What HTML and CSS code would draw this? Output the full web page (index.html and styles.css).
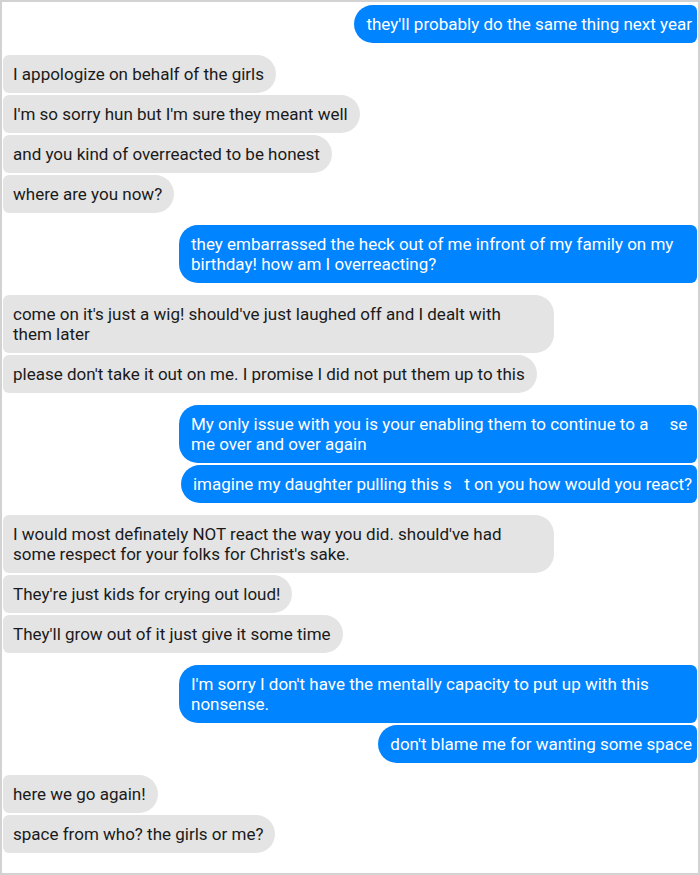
FILE: index.html
```html
<!DOCTYPE html>
<html lang="en">
<head>
<meta charset="utf-8">
<title>Chat</title>
<link rel="stylesheet" href="styles.css">
</head>
<body>
<div class="frame">
  <div class="thread">
    <div class="group">
      <div class="msg out">they'll probably do the same thing next year</div>
    </div>
    <div class="group">
      <div class="msg in">I appologize on behalf of the girls</div>
      <div class="msg in">I'm so sorry hun but I'm sure they meant well</div>
      <div class="msg in">and you kind of overreacted to be honest</div>
      <div class="msg in">where are you now?</div>
    </div>
    <div class="group">
      <div class="msg out">they embarrassed the heck out of me infront of my family on my birthday! how am I overreacting?</div>
    </div>
    <div class="group">
      <div class="msg in">come on it's just a wig! should've just laughed off and I dealt with them later</div>
      <div class="msg in">please don't take it out on me. I promise I did not put them up to this</div>
    </div>
    <div class="group">
      <div class="msg out">My only issue with you is your enabling them to continue to a&nbsp;&nbsp;&nbsp;&nbsp;&nbsp;se me over and over again</div>
      <div class="msg out">imagine my daughter pulling this s&nbsp;&nbsp;&nbsp;t on you how would you react?</div>
    </div>
    <div class="group">
      <div class="msg in">I would most definately NOT react the way you did. should've had some respect for your folks for Christ's sake.</div>
      <div class="msg in">They're just kids for crying out loud!</div>
      <div class="msg in">They'll grow out of it just give it some time</div>
    </div>
    <div class="group">
      <div class="msg out">I'm sorry I don't have the mentally capacity to put up with this nonsense.</div>
      <div class="msg out">don't blame me for wanting some space</div>
    </div>
    <div class="group">
      <div class="msg in">here we go again!</div>
      <div class="msg in">space from who? the girls or me?</div>
    </div>
  </div>
</div>
</body>
</html>
```

FILE: styles.css
```css
html, body {
  margin: 0;
  padding: 0;
  background: #ffffff;
}

.frame {
  box-sizing: border-box;
  width: 700px;
  height: 875px;
  border: 2px solid #d2d2d2;
  background: #ffffff;
  padding: 3px 1px 0 1px;
  overflow: hidden;
  font-family: Roboto, "Noto Sans", "Liberation Sans", sans-serif;
  font-size: 17px;
  line-height: 20px;
}

.thread {
  display: flex;
  flex-direction: column;
  gap: 12px;
}

.group {
  display: flex;
  flex-direction: column;
  gap: 2px;
}

.msg {
  box-sizing: border-box;
  padding: 9px 12px 9px 10px;
}

.in {
  align-self: flex-start;
  max-width: 551px;
  background: #e4e4e4;
  color: #1a1a1a;
  border-radius: 6px 19px 19px 6px;
}

.out {
  align-self: flex-end;
  max-width: 518px;
  background: #0084ff;
  color: #ffffff;
  padding: 9px 5px 9px 12px;
  border-radius: 19px 6px 6px 19px;
}
```
